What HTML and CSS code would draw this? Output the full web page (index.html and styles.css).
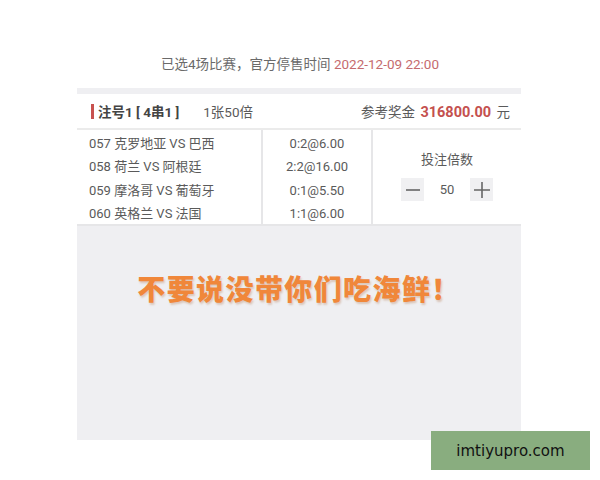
FILE: index.html
```html
<!DOCTYPE html>
<html lang="zh">
<head>
<meta charset="utf-8">
<link rel="stylesheet" href="styles.css">
</head>
<body>
<div class="page">
  <div class="summary">已选4场比赛，官方停售时间 <span class="date">2022-12-09 22:00</span></div>
  <div class="card">
    <div class="head">
      <div class="head-left">
        <span class="bar"></span>
        <span class="title">注号1 [ 4串1 ]</span>
        <span class="count">1张50倍</span>
      </div>
      <div class="prize">参考奖金 <b>316800.00</b> 元</div>
    </div>
    <div class="table">
      <div class="matches">
        <div class="row">057 克罗地亚 VS 巴西</div>
        <div class="row">058 荷兰 VS 阿根廷</div>
        <div class="row">059 摩洛哥 VS 葡萄牙</div>
        <div class="row">060 英格兰 VS 法国</div>
      </div>
      <div class="odds">
        <div class="row">0:2@6.00</div>
        <div class="row">2:2@16.00</div>
        <div class="row">0:1@5.50</div>
        <div class="row">1:1@6.00</div>
      </div>
      <div class="multi">
        <div class="multi-label">投注倍数</div>
        <div class="stepper">
          <span class="btn"><svg width="14" height="14" viewBox="0 0 14 14"><path d="M0 7H14" stroke="#666" stroke-width="1.6"/></svg></span>
          <span class="num">50</span>
          <span class="btn"><svg width="16" height="16" viewBox="0 0 16 16"><path d="M0 8H16M8 0V16" stroke="#666" stroke-width="1.6"/></svg></span>
        </div>
      </div>
    </div>
    <div class="panel">
      <div class="slogan">不要说没带你们吃海鲜！</div>
    </div>
  </div>
  <div class="mark">imtiyupro.com</div>
</div>
</body>
</html>
```
FILE: styles.css
```css
* { box-sizing: border-box; }
html, body { margin: 0; padding: 0; background: #fff; }
body {
  font-family: Roboto, "Noto Sans CJK SC", sans-serif;
  color: #5a5a5a;
}
.page {
  position: relative;
  width: 600px;
  height: 480px;
}
.summary {
  height: 88px;
  padding-top: 55px;
  text-align: center;
  font-size: 13.5px;
  color: #6a6a6a;
  line-height: 18px;
}
.date { color: #c56a6e; }
.card {
  margin-left: 77px;
  width: 444px;
  border-top: 6px solid #efeff2;
}
.head {
  height: 36px;
  display: flex;
  align-items: center;
  justify-content: space-between;
  padding: 0 11px 0 14px;
  border-bottom: 2px solid #ebebeb;
  font-size: 13.5px;
}
.head-left { display: flex; align-items: center; }
.bar {
  width: 3px;
  height: 15px;
  background: #c8524f;
  margin-right: 4px;
}
.title { font-weight: bold; color: #444; font-size: 13.5px; }
.count { margin-left: 24px; color: #5a5a5a; }
.prize { color: #5a5a5a; }
.prize b { color: #c4504e; font-size: 14.5px; margin: 0 2px; }
.table {
  display: grid;
  grid-template-columns: 186px 110px 148px;
  height: 96px;
  border-bottom: 2px solid #e6e6e8;
}
.matches { padding-left: 12px; border-right: 2px solid #e6e6e8; padding-top: 2px; }
.odds { text-align: center; border-right: 2px solid #e6e6e8; padding-top: 2px; }
.row { height: 23.3px; line-height: 23.3px; font-size: 13px; color: #5a5a5a; }
.multi {
  display: flex;
  flex-direction: column;
  align-items: center;
  padding-top: 21px;
}
.multi-label { font-size: 13px; color: #5a5a5a; line-height: 18px; }
.stepper {
  display: flex;
  align-items: center;
  margin-top: 9px;
}
.btn {
  width: 23px;
  height: 23px;
  background: #f0f0f2;
  display: flex;
  align-items: center;
  justify-content: center;
}
.num { width: 46px; text-align: center; font-size: 13px; color: #5a5a5a; }
.panel {
  background: #efeff2;
  height: 214px;
  display: flex;
  justify-content: center;
  padding-top: 44px;
}
.slogan {
  font-family: "Noto Sans CJK SC", sans-serif;
  font-weight: 900;
  font-size: 28px;
  line-height: 36px;
  color: #f0873a;
  text-shadow: 1px 2px 2px rgba(160, 80, 20, 0.25);
  letter-spacing: 1.4px;
}
.mark {
  position: absolute;
  left: 431px;
  top: 431px;
  width: 159px;
  height: 39px;
  background: #89ad7f;
  color: #111;
  font-family: "DejaVu Sans", sans-serif;
  font-size: 15px;
  display: flex;
  align-items: center;
  justify-content: center;
}
```
